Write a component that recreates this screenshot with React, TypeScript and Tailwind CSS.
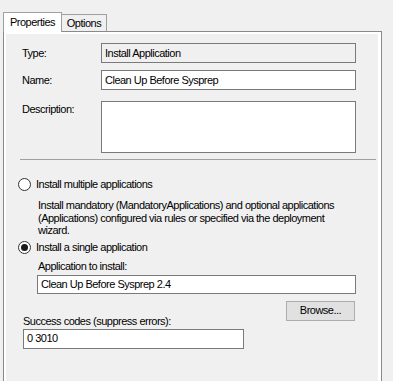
import React from 'react';

// Task sequence "Install Application" step properties page

function Radio({ checked }: { checked?: boolean }) {
  return (
    <span className="w-[13px] h-[13px] rounded-full border border-[#333333] bg-white flex items-center justify-center shrink-0">
      {checked && <span className="w-[7px] h-[7px] rounded-full bg-[#1a1a1a]" />}
    </span>
  );
}

function TextBox({ value, width, height = 20, readOnly }: { value?: string; width: number; height?: number; readOnly?: boolean }) {
  return (
    <div
      className={`border border-[#7a7a7a] pl-[3px] flex items-center leading-[13px] whitespace-nowrap overflow-hidden ${readOnly ? 'bg-[#f0f0f0]' : 'bg-white'}`}
      style={{ width, height }}
    >
      {value}
    </div>
  );
}

export default function App() {
  return (
    <div
      className="w-[393px] h-[381px] bg-[#f0f0f0] overflow-hidden text-[11px] tracking-[-0.5px] text-black"
      style={{ fontFamily: '"Liberation Sans", Arial, sans-serif' }}
    >
      {/* Tabs */}
      <div className="pt-[12px] pl-[3px] flex items-end h-[31px] relative z-10">
        <div className="h-[20px] -mb-px w-[59px] bg-white border border-b-0 border-[#a0a0a0] flex items-center justify-center leading-[13px]">
          Properties
        </div>
        <div className="h-[17px] w-[45px] bg-[#f0f0f0] border border-l-0 border-b-0 border-[#a0a0a0] flex items-center justify-center leading-[13px]">
          Options
        </div>
      </div>

      {/* Panel */}
      <div className="ml-[3px] w-[379px] h-[360px] border border-[#898989] bg-white pt-[2px] pl-[2px] pr-[3px]">
        <div className="h-full bg-[#f0f0f0] pt-[9px]">
          <div className="flex items-center pl-[16px]">
            <span className="w-[79px]">Type:</span>
            <TextBox value="Install Application" width={255} readOnly />
          </div>
          <div className="flex items-center pl-[16px] mt-[7px]">
            <span className="w-[79px]">Name:</span>
            <TextBox value="Clean Up Before Sysprep" width={255} />
          </div>
          <div className="flex items-start pl-[16px] mt-[11px]">
            <span className="w-[79px] mt-[2px] leading-[13px]">Description:</span>
            <TextBox width={255} height={52} />
          </div>

          <div className="ml-[14px] mt-[6px] w-[356px] h-px bg-[#a0a0a0]" />

          <div className="flex items-center ml-[12px] mt-[18px] gap-[5px] leading-[13px]">
            <Radio />
            <span>Install multiple applications</span>
          </div>
          <div className="ml-[32px] mt-[8px] leading-[12.5px] whitespace-nowrap">
            Install mandatory (MandatoryApplications) and optional applications
            <br />
            (Applications) configured via rules or specified via the deployment
            <br />
            wizard.
          </div>
          <div className="flex items-center ml-[12px] mt-[4px] gap-[5px] leading-[13px]">
            <Radio checked />
            <span>Install a single application</span>
          </div>

          <div className="ml-[32px] mt-[6px] leading-[13px]">Application to install:</div>
          <div className="ml-[31px] mt-[2px]">
            <TextBox value="Clean Up Before Sysprep 2.4" width={319} height={19} />
          </div>

          <div className="flex items-end justify-between mt-[7px] w-[349px]">
            <span className="ml-[17px] leading-[13px]">Success codes (suppress errors):</span>
            <button className="w-[69px] h-[20px] mb-[7px] bg-[#e1e1e1] border border-[#adadad] leading-[13px]">
              Browse...
            </button>
          </div>
          <div className="ml-[17px] mt-[1px]">
            <TextBox value="0 3010" width={221} />
          </div>
        </div>
      </div>
    </div>
  );
}
